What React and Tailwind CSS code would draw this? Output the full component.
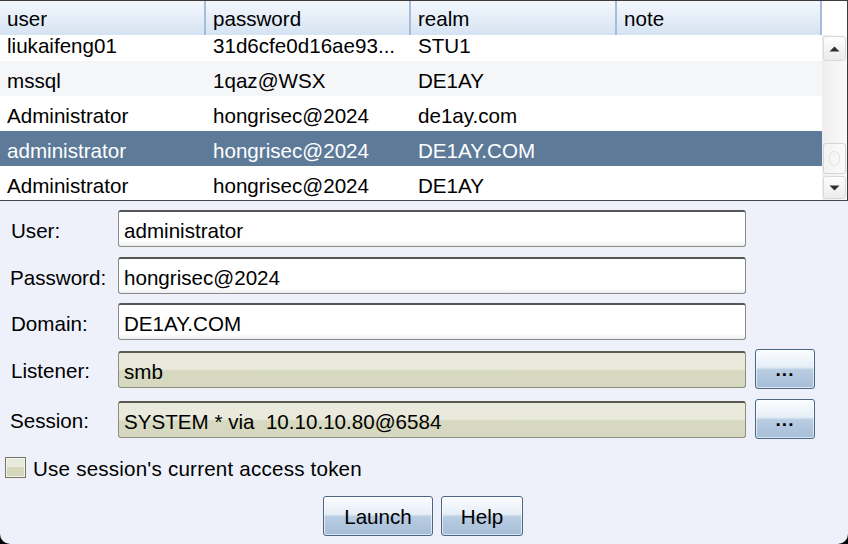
import React from "react";

const colW = ["w-[206px]", "w-[205px]", "w-[206px]", "w-[205px]"];

const rows = [
  ["liukaifeng01", "31d6cfe0d16ae93...", "STU1", ""],
  ["mssql", "1qaz@WSX", "DE1AY", ""],
  ["Administrator", "hongrisec@2024", "de1ay.com", ""],
  ["administrator", "hongrisec@2024", "DE1AY.COM", ""],
  ["Administrator", "hongrisec@2024", "DE1AY", ""],
];

function Arrow({ up }) {
  return (
    <svg width="11" height="6" viewBox="0 0 11 6">
      {up ? (
        <path d="M0.5 5.5 L5.5 0.5 L10.5 5.5 Z" fill="#2e2e2e" />
      ) : (
        <path d="M0.5 0.5 L5.5 5.5 L10.5 0.5 Z" fill="#2e2e2e" />
      )}
    </svg>
  );
}

function TextField({ value }) {
  return (
    <div className="w-[628px] h-[37px] rounded-[3px] border border-[#8a8a8a] border-t-[#555] border-t-2 bg-[linear-gradient(#ffffff_0%,#ffffff_85%,#eeeeee_100%)] pl-[5px] pt-[5px] leading-[28px] whitespace-nowrap">
      {value}
    </div>
  );
}

function ComboField({ value }) {
  return (
    <div className="w-[628px] h-[37px] rounded-[3px] border border-[#8d8d80] border-t-[#5a5a50] border-t-2 bg-[linear-gradient(#e9eadb_0%,#e9eadb_47%,#d6d9bf_53%,#d6d9bf_100%)] pl-[5px] pt-[5px] leading-[28px] whitespace-nowrap">
      {value}
    </div>
  );
}

function BlueButton({ children, className }) {
  return (
    <div
      className={
        "h-[40px] rounded-[3px] border border-[#4b6784] bg-[linear-gradient(#fbfdff_0%,#e6eef7_45%,#b9cde2_52%,#a6bed8_100%)] shadow-[inset_0_0_0_1px_rgba(255,255,255,0.6)] flex justify-center pt-[6px] leading-[28px] text-black " +
        className
      }
    >
      {children}
    </div>
  );
}

export default function App() {
  return (
    <div className="w-[848px] h-[544px] bg-black font-['Liberation_Sans',Arial,sans-serif] text-[20.6px] text-black">
      <div className="h-full bg-[#eef1f9] rounded-b-[10px] overflow-hidden border-t border-[#3b3b3b] flex flex-col">
        {/* table area */}
        <div className="h-[200px] border-b border-[#454545] flex bg-white shrink-0">
          <div className="w-[822px] flex flex-col">
            <div className="h-[34px] flex bg-[linear-gradient(#f4f8fd,#d6e3f3)] shrink-0">
              {["user", "password", "realm", "note"].map((h, i) => (
                <div
                  key={h}
                  className={colW[i] + " h-full border-r-2 border-[#a3bddb] pl-[7px] pt-[4px] leading-[28px]"}
                >
                  {h}
                </div>
              ))}
            </div>
            <div className="flex-1 overflow-hidden">
              <div className="mt-[-9px]">
                {rows.map((r, ri) => {
                  const sel = ri === 3;
                  const bg = sel ? "bg-[#5d7a98] text-white" : ri % 2 === 1 ? "bg-[#f5f6f8]" : "bg-white";
                  return (
                    <div key={ri} className={"h-[35px] flex " + bg}>
                      {r.map((c, ci) => (
                        <div key={ci} className={colW[ci] + " pl-[7px] pt-[6px] leading-[28px] whitespace-nowrap"}>
                          {c}
                        </div>
                      ))}
                    </div>
                  );
                })}
              </div>
            </div>
          </div>
          <div className="w-[26px] flex flex-col border-r border-[#3b3b3b]">
            <div className="h-[34px] bg-white shrink-0" />
            <div className="flex-1 bg-[linear-gradient(90deg,#eeeeee,#fafafa)] flex flex-col px-[1px] pb-[1px]">
              <div className="h-[25px] mt-[1px] rounded-[3px] border border-[#d9d9d9] bg-[linear-gradient(#fdfdfd,#ececec)] flex items-center justify-center">
                <Arrow up />
              </div>
              <div className="h-[82px]" />
              <div className="h-[31px] rounded-[3px] border border-[#d4d4d4] bg-[linear-gradient(90deg,#f2f2f2,#fbfbfb)] flex items-center justify-center">
                <div className="w-[11px] h-[15px] rounded-full border border-[#e2e2e2]" />
              </div>
              <div className="h-[2px]" />
              <div className="h-[23px] rounded-[3px] border border-[#d9d9d9] bg-[linear-gradient(#fdfdfd,#ececec)] flex items-center justify-center">
                <Arrow />
              </div>
            </div>
          </div>
        </div>

        {/* form */}
        <div className="flex flex-col pt-[9px]">
          <div className="h-[37px] flex items-center">
            <div className="w-[118px] pl-[11px] pt-[4px] leading-[28px]">User:</div>
            <TextField value="administrator" />
          </div>
          <div className="h-[37px] mt-[10px] flex items-center">
            <div className="w-[118px] pl-[10px] pt-[4px] leading-[28px]">Password:</div>
            <TextField value="hongrisec@2024" />
          </div>
          <div className="h-[37px] mt-[9px] flex items-center">
            <div className="w-[118px] pl-[11px] pt-[4px] leading-[28px]">Domain:</div>
            <TextField value="DE1AY.COM" />
          </div>
          <div className="h-[40px] mt-[9px] flex items-center">
            <div className="w-[118px] pl-[11px] pt-[3px] leading-[28px]">Listener:</div>
            <ComboField value="smb" />
            <BlueButton className="w-[60px] ml-[9px] text-[19px] font-bold tracking-[1px]">...</BlueButton>
          </div>
          <div className="h-[40px] mt-[10px] flex items-center">
            <div className="w-[118px] pl-[10px] pt-[3px] leading-[28px]">Session:</div>
            <ComboField value={"SYSTEM * via\u00a0\u00a010.10.10.80@6584"} />
            <BlueButton className="w-[60px] ml-[9px] text-[19px] font-bold tracking-[1px]">...</BlueButton>
          </div>
          <div className="mt-[18px] h-[21px] flex items-center">
            <div className="ml-[5px] w-[21px] h-[21px] border border-[#76766a] bg-[linear-gradient(#e8eadb_0%,#e8eadb_50%,#d4d7bc_50%,#d4d7bc_100%)] shadow-[inset_0_0_0_1px_#f4f5ec]" />
            <div className="ml-[7px] pt-[2px] leading-[24px] tracking-[0.2px]">Use session's current access token</div>
          </div>
          <div className="mt-[18px] flex justify-center gap-[8px] pr-[2px]">
            <BlueButton className="w-[110px]">Launch</BlueButton>
            <BlueButton className="w-[82px]">Help</BlueButton>
          </div>
        </div>
      </div>
    </div>
  );
}
